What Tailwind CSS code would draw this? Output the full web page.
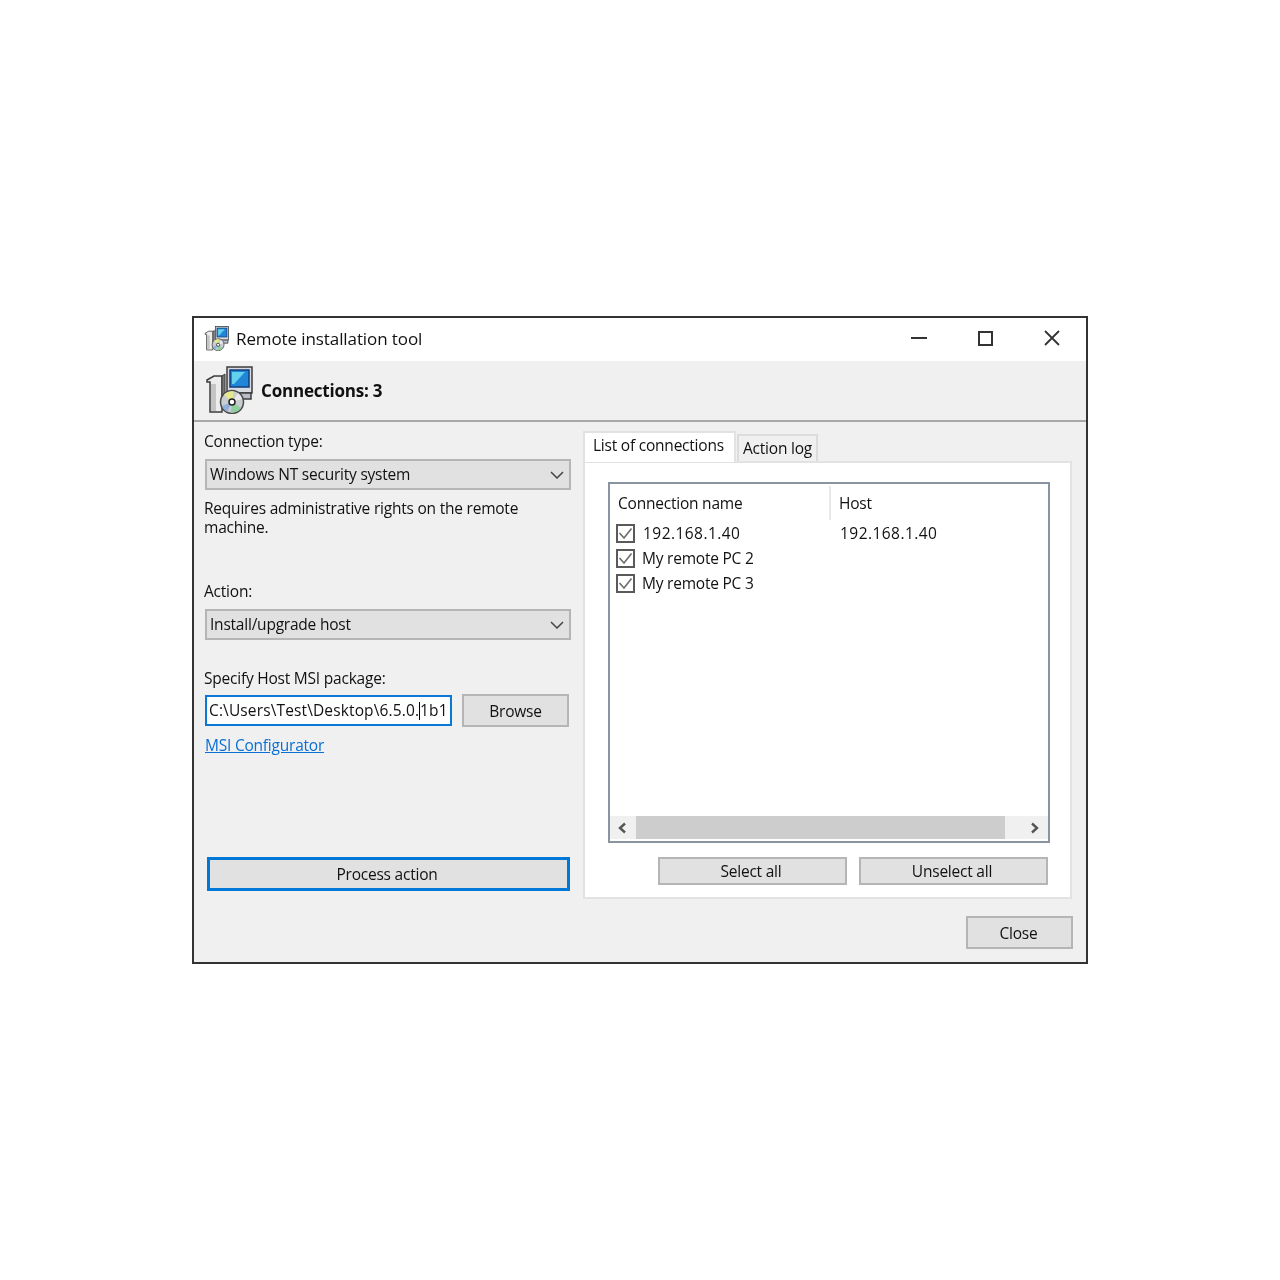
<!DOCTYPE html>
<html lang="en">
  <head>
    <meta charset="UTF-8" />
    <title>Remote installation tool</title>
    <script src="https://cdn.jsdelivr.net/npm/@tailwindcss/browser@4"></script>
  </head>
  <body class="bg-white min-h-screen flex items-center justify-center font-['Open_Sans',sans-serif] text-[15.5px] tracking-[-0.22px] text-[#111]">
    <svg class="hidden">
      <symbol id="setup-icon" viewBox="0 0 48 48">
        <path d="M2 14 L9 10 L17 10 L17 46 L5 46 L5 16 L2 16 Z" fill="#ececec" stroke="#3c3c3c" stroke-width="1.5" />
        <rect x="6" y="18" width="5" height="27" fill="#c4c4c4" />
        <path d="M17 10 L20 8 L20 30 L17 32 Z" fill="#777" stroke="#3c3c3c" />
        <rect x="22" y="1" width="25" height="26" fill="#d8dbe2" stroke="#3c3c3c" stroke-width="1.5" />
        <rect x="25" y="4" width="19" height="17" fill="#1f86d8" stroke="#123a78" stroke-width="1.5" />
        <path d="M27 6 L40 6 L29 18 L27 18 Z" fill="#63d0ee" />
        <path d="M24 27 L46 27 L46 33 L36 33 L36 30 L24 30 Z" fill="#b9bcc4" stroke="#3c3c3c" stroke-width="1.5" />
        <circle cx="27" cy="36" r="11.5" fill="#c9ccd0" stroke="#4a4a4a" stroke-width="1.5" />
        <path d="M27 36 L19 29 A11 11 0 0 1 29 25.5 Z" fill="#e4e88a" />
        <path d="M27 36 L36 42 A11 11 0 0 1 26 46.5 Z" fill="#8fcf9f" />
        <path d="M27 36 L17 40 A11 11 0 0 0 22 46 Z" fill="#8fb0dc" />
        <path d="M27 36 L37 33 A11 11 0 0 0 33 27 Z" fill="#e8e8ea" />
        <circle cx="27" cy="36" r="3" fill="#fff" stroke="#222" stroke-width="1.5" />
      </symbol>
      <symbol id="check-box" viewBox="0 0 19 19">
        <rect x="1" y="1" width="17" height="17" fill="#fff" stroke="#5a5a5a" stroke-width="2" />
        <path d="M3.5 9 L8 14 L15.5 4.5" fill="none" stroke="#707070" stroke-width="1.7" />
      </symbol>
      <symbol id="combo-arrow" viewBox="0 0 14 8">
        <path d="M1 1 L7 7 L13 1" fill="none" stroke="#444" stroke-width="1.5" />
      </symbol>
    </svg>

    <div class="w-[896px] h-[648px] border-2 border-[#333] bg-[#f0f0f0] flex flex-col blur-[0.35px]">
      <!-- title bar -->
      <div class="h-[43px] bg-white flex items-center shrink-0">
        <svg class="w-[25px] h-[25px] ml-[10px] mt-[-2px]"><use href="#setup-icon" /></svg>
        <span class="ml-[7px] mt-[-2px] text-[17px] tracking-[-0.1px]">Remote installation tool</span>
        <div class="ml-auto flex items-center mt-[-3px]">
          <div class="w-[66px] h-[40px] flex items-center justify-center"><div class="w-[16px] h-[2px] bg-[#333]"></div></div>
          <div class="w-[66px] h-[40px] flex items-center justify-center"><div class="w-[15px] h-[15px] border-2 border-[#333]"></div></div>
          <div class="w-[68px] h-[40px] flex items-center justify-center">
            <svg class="w-[16px] h-[16px]" viewBox="0 0 16 16"><path d="M1 1 L15 15 M15 1 L1 15" stroke="#333" stroke-width="1.8" /></svg>
          </div>
        </div>
      </div>
      <!-- header band -->
      <div class="h-[61px] shrink-0 flex items-center border-b-2 border-[#a8a8a8]">
        <svg class="w-[48px] h-[48px] ml-[11px] mt-[-2px]"><use href="#setup-icon" /></svg>
        <span class="ml-[8px] font-bold text-[17px] tracking-[-0.2px]">Connections: 3</span>
      </div>

      <div class="flex-1 flex">
        <!-- left column -->
        <div class="w-[389px] pl-[10px] shrink-0 flex flex-col">
          <div class="h-[20px] mt-[9px] leading-[20px]">Connection type:</div>
          <div class="w-[366px] h-[31px] mt-[8px] ml-[1px] bg-[#e1e1e1] border-2 border-[#b5b5b5] flex items-center pl-[3px] pr-[5px]">
            <span>Windows NT security system</span>
            <svg class="w-[14px] h-[8px] ml-auto"><use href="#combo-arrow" /></svg>
          </div>
          <p class="mt-[9px] leading-[19px] w-[350px]">Requires administrative rights on the remote machine.</p>
          <div class="h-[20px] mt-[44px] leading-[20px]">Action:</div>
          <div class="w-[366px] h-[31px] mt-[8px] ml-[1px] bg-[#e1e1e1] border-2 border-[#b5b5b5] flex items-center pl-[3px] pr-[5px]">
            <span>Install/upgrade host</span>
            <svg class="w-[14px] h-[8px] ml-auto"><use href="#combo-arrow" /></svg>
          </div>
          <div class="h-[20px] mt-[28px] leading-[20px]">Specify Host MSI package:</div>
          <div class="flex items-center mt-[6px] ml-[1px]">
            <div class="w-[247px] h-[31px] bg-white border-2 border-[#0a78d7] flex items-center pl-[2px] whitespace-nowrap overflow-hidden tracking-[0.13px]">
              <span>C:\Users\Test\Desktop\6.5.0.</span><span class="w-px h-[18px] bg-black"></span><span>1b1</span>
            </div>
            <div class="w-[107px] h-[33px] ml-[10px] bg-[#e1e1e1] border-2 border-[#b5b5b5] flex items-center justify-center pt-[2px]">Browse</div>
          </div>
          <a class="mt-[8px] text-[#0a6fd4] underline leading-[20px] w-fit ml-px">MSI Configurator</a>
          <div class="w-[363px] h-[34px] mt-[102px] ml-[3px] bg-[#e1e1e1] border-[3px] border-[#0078d7] flex items-center justify-center pt-[2px] pr-[3px]">Process action</div>
        </div>

        <!-- right column -->
        <div class="flex-1 flex flex-col pt-[9px]">
          <div class="flex items-end h-[30px] z-10">
            <div class="w-[153px] h-[31px] bg-white border-2 border-b-0 border-[#e2e2e2] flex items-start pl-[8px] pt-[1px] mb-[-1px]">List of connections</div>
            <div class="w-[81px] h-[27px] ml-px bg-[#f0f0f0] border-2 border-b-0 border-[#dcdcdc] flex items-center pl-[4px]">Action log</div>
          </div>
          <div class="w-[489px] h-[438px] bg-white border-2 border-[#e2e2e2] flex flex-col">
            <div class="w-[442px] h-[361px] ml-[23px] mt-[19px] border-2 border-[#8a93a0] flex flex-col">
              <div class="flex h-[34px] mt-[2px] shrink-0 items-center">
                <div class="w-[221px] h-full flex items-center pl-[8px] pt-[2px] border-r-2 border-[#e8e8e8]">Connection name</div>
                <div class="pl-[8px] pt-[2px] self-stretch flex items-center">Host</div>
              </div>
              <div class="flex items-center h-[25px] mt-[1px]">
                <svg class="w-[19px] h-[19px] ml-[6px] shrink-0"><use href="#check-box" /></svg>
                <span class="ml-[8px] w-[197px] tracking-[0.45px]">192.168.1.40</span>
                <span class="tracking-[0.45px]">192.168.1.40</span>
              </div>
              <div class="flex items-center h-[25px]">
                <svg class="w-[19px] h-[19px] ml-[6px] shrink-0"><use href="#check-box" /></svg>
                <span class="ml-[7px]">My remote PC 2</span>
              </div>
              <div class="flex items-center h-[25px]">
                <svg class="w-[19px] h-[19px] ml-[6px] shrink-0"><use href="#check-box" /></svg>
                <span class="ml-[7px]">My remote PC 3</span>
              </div>
              <div class="mt-auto h-[23px] mb-[2px] bg-[#f0f0f0] flex items-center">
                <svg class="w-[26px] h-[12px] shrink-0" viewBox="0 0 26 12"><path d="M15 1.5 L10 6 L15 10.5" fill="none" stroke="#555" stroke-width="2.4" /></svg>
                <div class="w-[369px] h-full bg-[#cdcdcd]"></div>
                <svg class="w-[43px] h-[12px] shrink-0" viewBox="0 0 43 12"><path d="M27 1.5 L32 6 L27 10.5" fill="none" stroke="#555" stroke-width="2.4" /></svg>
              </div>
            </div>
            <div class="flex justify-end gap-[12px] mt-[14px] mr-[22px]">
              <div class="w-[189px] h-[28px] bg-[#e1e1e1] border-2 border-[#b5b5b5] flex items-center justify-center pt-[1px] pr-[3px]">Select all</div>
              <div class="w-[189px] h-[28px] bg-[#e1e1e1] border-2 border-[#b5b5b5] flex items-center justify-center pt-[1px] pr-[3px]">Unselect all</div>
            </div>
          </div>
          <div class="w-[107px] h-[33px] mt-[17px] ml-[383px] bg-[#e1e1e1] border-2 border-[#b5b5b5] flex items-center justify-center pt-[2px] pr-[2px]">Close</div>
        </div>
      </div>
    </div>
  </body>
</html>
